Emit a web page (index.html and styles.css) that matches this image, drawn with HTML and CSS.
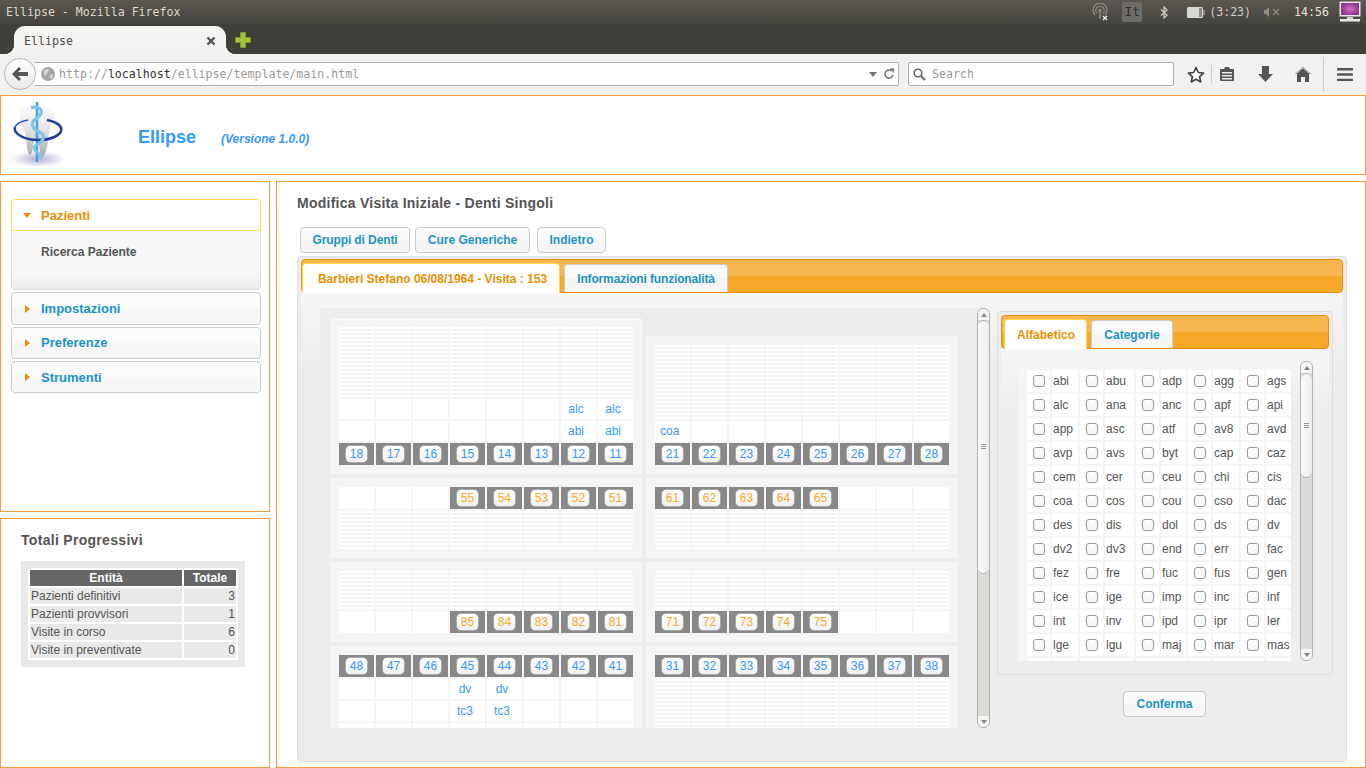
FILE: index.html
```html
<!DOCTYPE html>
<html lang="it">

<head>
    <meta charset="UTF-8">
    <meta name="viewport" content="width=device-width, initial-scale=1.0">
    <title>Ellipse</title>
    <link rel="stylesheet" href="styles.css">
</head>

<body>
    <!-- desktop panel -->
    <div class="titlebar">
        <span class="win-title">Ellipse - Mozilla Firefox</span>
        <div class="indicators">
            <svg class="ind-net" width="16" height="18" viewBox="0 0 16 18"><g fill="none" stroke="#8b8a84" stroke-width="1.3"><path d="M3 12a7 7 0 1 1 10 0"/><path d="M5 10.5a4.2 4.2 0 1 1 6 0"/></g><circle cx="8" cy="7.5" r="1.7" fill="#8b8a84"/><rect x="7.2" y="9" width="1.6" height="7" fill="#8b8a84"/><path d="M11 13l4 4M15 13l-4 4" stroke="#eee" stroke-width="1.4"/></svg>
            <span class="ind-lang">It</span>
            <svg class="ind-bt" width="8" height="13" viewBox="0 0 8 13"><path d="M1 3.5l6 5.5-3 3V1l3 3-6 5.5" fill="none" stroke="#c9c8c3" stroke-width="1.3"/></svg>
            <svg class="ind-batt" width="18" height="11" viewBox="0 0 18 11"><rect width="16" height="11" rx="1.5" fill="#d8d7d3"/><rect x="12" y="1" width="3" height="9" fill="#8e8d88"/><rect x="16" y="3" width="2" height="5" fill="#8e8d88"/></svg>
            <span class="ind-text ind-time-left">(3:23)</span>
            <svg class="ind-vol" width="16" height="10" viewBox="0 0 16 10"><path d="M0 3h2l3-3v10L2 7H0z" fill="#8f8e89"/><path d="M9 2l6 6M15 2l-6 6" stroke="#8f8e89" stroke-width="1.2"/></svg>
            <span class="ind-text ind-clock">14:56</span>
            <svg class="ind-mon" width="22" height="22" viewBox="0 0 22 22"><defs><radialGradient id="screen"><stop offset="0" stop-color="#d070c4"/><stop offset="1" stop-color="#8e3a8e"/></radialGradient></defs><rect x="0.5" y="0.5" width="21" height="15" fill="#e8e8e6"/><rect x="2" y="2" width="18" height="12" fill="url(#screen)"/><rect x="8" y="16" width="6" height="2" fill="#d0d0ce"/><rect x="1" y="18" width="20" height="2.5" fill="#e8e8e6"/></svg>
        </div>
    </div>

    <!-- browser chrome -->
    <div class="tabbar">
        <div class="tab">
            <span>Ellipse</span>
            <svg width="10" height="10" viewBox="0 0 10 10"><path d="M1.5 1.5l7 7M8.5 1.5l-7 7" stroke="#555" stroke-width="2.4"/></svg>
        </div>
        <svg class="new-tab" width="16" height="16" viewBox="0 0 16 16"><path d="M5.5 .5h5v5h5v5h-5v5h-5v-5h-5v-5h5z" fill="#a4c639" stroke="#7d9a2a"/></svg>
    </div>
    <div class="navbar">
        <div class="back-btn">
            <svg width="16" height="14" viewBox="0 0 16 14"><path d="M7 0l2 2-3 3h10v4H6l3 3-2 2-7-7z" fill="#555"/></svg>
        </div>
        <div class="urlbar">
            <svg class="globe" width="14" height="14" viewBox="0 0 14 14"><circle cx="7" cy="7" r="7" fill="#a5a5a5"/><path d="M3 3l4-1 1 2-2 2-1 3-2-2zM9 8l3-1-1 4-2 1z" fill="#d8d8d8"/></svg>
            <span class="url"><span class="url-dim">http://</span>localhost<span class="url-dim">/ellipse/template/main.html</span></span>
            <svg class="url-drop" width="8" height="5" viewBox="0 0 8 5"><path d="M0 0h8L4 5z" fill="#777"/></svg>
            <svg class="url-reload" width="12" height="12" viewBox="0 0 12 12"><path d="M10 6.5A4 4 0 1 1 8.6 3" fill="none" stroke="#777" stroke-width="1.6"/><path d="M7 0l4.500 .5L10.500 5z" fill="#777"/></svg>
        </div>
        <div class="searchbar">
            <svg width="13" height="13" viewBox="0 0 13 13"><circle cx="5" cy="5" r="3.800" fill="none" stroke="#666" stroke-width="1.600"/><path d="M8 8l4 4" stroke="#666" stroke-width="2"/></svg>
            <span>Search</span>
        </div>
        <svg class="nav-star" width="18" height="17" viewBox="0 0 18 17"><path d="M9 1.500l2.300 5 5.200 .6-3.900 3.500 1.100 5.300L9 13.200l-4.700 2.700 1.100-5.300L1.500 7.100l5.200-.6z" fill="#fff" stroke="#444" stroke-width="1.700" stroke-linejoin="round"/></svg>
        <span class="nav-sep nav-sep-short"></span>
        <svg class="nav-list" width="14" height="16" viewBox="0 0 14 16"><path d="M1 3h3l1-2h4l1 2h3a1 1 0 0 1 1 1v10a1 1 0 0 1-1 1H1a1 1 0 0 1-1-1V4a1 1 0 0 1 1-1z" fill="#555"/><path d="M2 6h10v1.500H2zM2 9h10v1.500H2zM2 12h10v1.500H2z" fill="#eee"/></svg>
        <svg class="nav-down" width="15" height="16" viewBox="0 0 15 16"><path d="M4 0h7v8h4l-7.500 8L0 8h4z" fill="#555"/></svg>
        <svg class="nav-home" width="16" height="15" viewBox="0 0 16 15"><path d="M8 0l8 7h-2v8H10v-5H6v5H2V7H0z" fill="#555"/><path d="M1.500 6.500L8 1l6.500 5.500" fill="none" stroke="#f2f1f0" stroke-width=".8"/></svg>
        <span class="nav-sep nav-sep-tall"></span>
        <svg class="nav-menu" width="16" height="13" viewBox="0 0 16 13"><path d="M0 1a1 1 0 0 1 1-1h14a1 1 0 0 1 0 2.400H1A1 1 0 0 1 0 1zM0 6.500a1 1 0 0 1 1-1.200h14a1 1 0 0 1 0 2.400H1A1 1 0 0 1 0 6.500zM0 12a1 1 0 0 1 1-1.200h14a1 1 0 0 1 0 2.400H1A1 1 0 0 1 0 12z" fill="#555"/></svg>
    </div>

    <!-- page -->
    <header class="box site-header">
        <svg class="logo" width="60" height="68" viewBox="0 0 60 68">
            <defs>
                <radialGradient id="shadow"><stop offset="0" stop-color="#aeaed2"/><stop offset="1" stop-color="#fff"/></radialGradient>
                <linearGradient id="tooth" x1="0" y1="0" x2="0" y2="1"><stop offset="0" stop-color="#fbfbfb"/><stop offset=".45" stop-color="#e4e4e4"/><stop offset="1" stop-color="#a9a9a9"/></linearGradient>
            </defs>
            <ellipse cx="28" cy="59" rx="28" ry="8" fill="url(#shadow)"/>
            <path d="M10 16c0-7 5-10 11-9 3 .5 5 1.500 8 .5 5-2 13-2 15 5 1 7-3 12-5 20-1 8-2 22-7 25-3-3-2-17-6-18-4 0-2 14-6 16-4-4-3-15-5-23-2-6-5-9-5-16z" fill="url(#tooth)"/>
            <path d="M27 2v60" stroke="#4f9fd6" stroke-width="2.500"/>
            <path d="M5 27c-2 6 8 13 23 13s25-6 23-12c-1-4-8-7-14-8" fill="none" stroke="#1f3f9e" stroke-width="2.600"/>
            <path d="M5 27c2-4 7-6 13-7" fill="none" stroke="#2a52b8" stroke-width="1.600"/>
            <path d="M21 8c7-3 13 2 9 7s-10 6-7 12 13 5 10 12-11 5-8 11 7 3 5 9" fill="none" stroke="#7cc4ee" stroke-width="3.200"/>
        </svg>
        <h1 class="app-name">Ellipse</h1>
        <span class="app-version">(Versione 1.0.0)</span>
    </header>

    <div class="columns">
        <aside class="sidebar">
            <nav class="box menu-box">
                <div class="accordion">
                    <div class="acc-head acc-head-open"><span class="arrow-down"></span>Pazienti</div>
                    <div class="acc-body"><a>Ricerca Paziente</a></div>
                    <div class="acc-head acc-head-tall"><span class="arrow-right"></span>Impostazioni</div>
                    <div class="acc-head"><span class="arrow-right"></span>Preferenze</div>
                    <div class="acc-head"><span class="arrow-right"></span>Strumenti</div>
                </div>
            </nav>
            <section class="box totals-box">
                <h2>Totali Progressivi</h2>
                <div class="totals-wrap">
                    <table class="totals">
                        <tr><th>Entità</th><th>Totale</th></tr>
                        <tr><td>Pazienti definitivi</td><td class="num">3</td></tr>
                        <tr><td>Pazienti provvisori</td><td class="num">1</td></tr>
                        <tr><td>Visite in corso</td><td class="num">6</td></tr>
                        <tr><td>Visite in preventivate</td><td class="num">0</td></tr>
                    </table>
                </div>
            </section>
        </aside>

        <main class="box main-box">
            <h2 class="page-title">Modifica Visita Iniziale - Denti Singoli</h2>
            <div class="actions">
                <button class="btn btn-first">Gruppi di Denti</button>
                <button class="btn btn-second">Cure Generiche</button>
                <button class="btn btn-third">Indietro</button>
            </div>

            <div class="widget">
                <div class="tabs-head">
                    <span class="tab-item tab-active tab-visit">Barbieri Stefano 06/08/1964 - Visita : 153</span>
                    <span class="tab-item tab-info">Informazioni funzionalità</span>
                </div>
                <div class="widget-body">
                    <div class="chart-area">
                        <div class="quads">
                            <div class="quad quad-tall">
                                <div class="teeth">
                                    <i class="lines h70"></i><i class="lines h70"></i><i class="lines h70"></i><i class="lines h70"></i><i class="lines h70"></i><i class="lines h70"></i><i class="lines h70"></i><i class="lines h70"></i>
                                    <b></b><b></b><b></b><b></b><b></b><b></b><b>alc</b><b>alc</b>
                                    <b></b><b></b><b></b><b></b><b></b><b></b><b>abi</b><b>abi</b>
                                    <u><span>18</span></u><u><span>17</span></u><u><span>16</span></u><u><span>15</span></u><u><span>14</span></u><u><span>13</span></u><u><span>12</span></u><u><span>11</span></u>
                                </div>
                            </div>
                            <div class="quad quad-low">
                                <div class="teeth">
                                    <i class="lines h74"></i><i class="lines h74"></i><i class="lines h74"></i><i class="lines h74"></i><i class="lines h74"></i><i class="lines h74"></i><i class="lines h74"></i><i class="lines h74"></i>
                                    <b class="left">coa</b><b></b><b></b><b></b><b></b><b></b><b></b><b></b>
                                    <u><span>21</span></u><u><span>22</span></u><u><span>23</span></u><u><span>24</span></u><u><span>25</span></u><u><span>26</span></u><u><span>27</span></u><u><span>28</span></u>
                                </div>
                            </div>
                            <div class="quad">
                                <div class="teeth milk">
                                    <b class="tall"></b><b class="tall"></b><b class="tall"></b><u><span>55</span></u><u><span>54</span></u><u><span>53</span></u><u><span>52</span></u><u><span>51</span></u>
                                    <i class="lines h38"></i><i class="lines h38"></i><i class="lines h38"></i><i class="lines h38"></i><i class="lines h38"></i><i class="lines h38"></i><i class="lines h38"></i><i class="lines h38"></i>
                                </div>
                            </div>
                            <div class="quad">
                                <div class="teeth milk">
                                    <u><span>61</span></u><u><span>62</span></u><u><span>63</span></u><u><span>64</span></u><u><span>65</span></u><b class="tall"></b><b class="tall"></b><b class="tall"></b>
                                    <i class="lines h38"></i><i class="lines h38"></i><i class="lines h38"></i><i class="lines h38"></i><i class="lines h38"></i><i class="lines h38"></i><i class="lines h38"></i><i class="lines h38"></i>
                                </div>
                            </div>
                            <div class="quad">
                                <div class="teeth milk">
                                    <i class="lines h38"></i><i class="lines h38"></i><i class="lines h38"></i><i class="lines h38"></i><i class="lines h38"></i><i class="lines h38"></i><i class="lines h38"></i><i class="lines h38"></i>
                                    <b class="tall"></b><b class="tall"></b><b class="tall"></b><u><span>85</span></u><u><span>84</span></u><u><span>83</span></u><u><span>82</span></u><u><span>81</span></u>
                                </div>
                            </div>
                            <div class="quad">
                                <div class="teeth milk">
                                    <i class="lines h38"></i><i class="lines h38"></i><i class="lines h38"></i><i class="lines h38"></i><i class="lines h38"></i><i class="lines h38"></i><i class="lines h38"></i><i class="lines h38"></i>
                                    <u><span>71</span></u><u><span>72</span></u><u><span>73</span></u><u><span>74</span></u><u><span>75</span></u><b class="tall"></b><b class="tall"></b><b class="tall"></b>
                                </div>
                            </div>
                            <div class="quad">
                                <div class="teeth">
                                    <u><span>48</span></u><u><span>47</span></u><u><span>46</span></u><u><span>45</span></u><u><span>44</span></u><u><span>43</span></u><u><span>42</span></u><u><span>41</span></u>
                                    <b></b><b></b><b></b><b>dv</b><b>dv</b><b></b><b></b><b></b>
                                    <b></b><b></b><b></b><b>tc3</b><b>tc3</b><b></b><b></b><b></b>
                                    <b></b><b></b><b></b><b></b><b></b><b></b><b></b><b></b>
                                </div>
                            </div>
                            <div class="quad">
                                <div class="teeth">
                                    <u><span>31</span></u><u><span>32</span></u><u><span>33</span></u><u><span>34</span></u><u><span>35</span></u><u><span>36</span></u><u><span>37</span></u><u><span>38</span></u>
                                    <i class="lines h74"></i><i class="lines h74"></i><i class="lines h74"></i><i class="lines h74"></i><i class="lines h74"></i><i class="lines h74"></i><i class="lines h74"></i><i class="lines h74"></i>
                                </div>
                            </div>
                        </div>
                    </div>

                    <div class="scrollbar scroll-main">
                        <span class="sb-btn sb-up"></span>
                        <span class="sb-thumb"><em></em></span>
                        <span class="sb-track"></span>
                        <span class="sb-btn sb-down"></span>
                    </div>

                    <div class="side-col">
                        <div class="cure-panel">
                            <div class="tabs-head tabs-small">
                                <span class="tab-item tab-active tab-alfa">Alfabetico</span>
                                <span class="tab-item tab-cat">Categorie</span>
                            </div>
                            <div class="cure-body">
                                <div class="cure-list">
                                    <div class="cures">
                                        <s><input type="checkbox"></s><label>abi</label><s><input type="checkbox"></s><label>abu</label><s><input type="checkbox"></s><label>adp</label><s><input type="checkbox"></s><label>agg</label><s><input type="checkbox"></s><label>ags</label>
                                        <s><input type="checkbox"></s><label>alc</label><s><input type="checkbox"></s><label>ana</label><s><input type="checkbox"></s><label>anc</label><s><input type="checkbox"></s><label>apf</label><s><input type="checkbox"></s><label>api</label>
                                        <s><input type="checkbox"></s><label>app</label><s><input type="checkbox"></s><label>asc</label><s><input type="checkbox"></s><label>atf</label><s><input type="checkbox"></s><label>av8</label><s><input type="checkbox"></s><label>avd</label>
                                        <s><input type="checkbox"></s><label>avp</label><s><input type="checkbox"></s><label>avs</label><s><input type="checkbox"></s><label>byt</label><s><input type="checkbox"></s><label>cap</label><s><input type="checkbox"></s><label>caz</label>
                                        <s><input type="checkbox"></s><label>cem</label><s><input type="checkbox"></s><label>cer</label><s><input type="checkbox"></s><label>ceu</label><s><input type="checkbox"></s><label>chi</label><s><input type="checkbox"></s><label>cis</label>
                                        <s><input type="checkbox"></s><label>coa</label><s><input type="checkbox"></s><label>cos</label><s><input type="checkbox"></s><label>cou</label><s><input type="checkbox"></s><label>cso</label><s><input type="checkbox"></s><label>dac</label>
                                        <s><input type="checkbox"></s><label>des</label><s><input type="checkbox"></s><label>dis</label><s><input type="checkbox"></s><label>dol</label><s><input type="checkbox"></s><label>ds</label><s><input type="checkbox"></s><label>dv</label>
                                        <s><input type="checkbox"></s><label>dv2</label><s><input type="checkbox"></s><label>dv3</label><s><input type="checkbox"></s><label>end</label><s><input type="checkbox"></s><label>err</label><s><input type="checkbox"></s><label>fac</label>
                                        <s><input type="checkbox"></s><label>fez</label><s><input type="checkbox"></s><label>fre</label><s><input type="checkbox"></s><label>fuc</label><s><input type="checkbox"></s><label>fus</label><s><input type="checkbox"></s><label>gen</label>
                                        <s><input type="checkbox"></s><label>ice</label><s><input type="checkbox"></s><label>ige</label><s><input type="checkbox"></s><label>imp</label><s><input type="checkbox"></s><label>inc</label><s><input type="checkbox"></s><label>inf</label>
                                        <s><input type="checkbox"></s><label>int</label><s><input type="checkbox"></s><label>inv</label><s><input type="checkbox"></s><label>ipd</label><s><input type="checkbox"></s><label>ipr</label><s><input type="checkbox"></s><label>ler</label>
                                        <s><input type="checkbox"></s><label>lge</label><s><input type="checkbox"></s><label>lgu</label><s><input type="checkbox"></s><label>maj</label><s><input type="checkbox"></s><label>mar</label><s><input type="checkbox"></s><label>mas</label>
                                        <s></s><label></label><s></s><label></label><s></s><label></label><s></s><label></label><s></s><label></label>
                                    </div>
                                </div>
                                <div class="scrollbar scroll-cure">
                                    <span class="sb-btn sb-up"></span>
                                    <span class="sb-thumb"><em></em></span>
                                    <span class="sb-track"></span>
                                    <span class="sb-btn sb-down"></span>
                                </div>
                            </div>
                        </div>
                        <button class="btn btn-confirm">Conferma</button>
                    </div>
                </div>
            </div>
        </main>
    </div>
</body>

</html>
```

FILE: styles.css
```css
* {
    box-sizing: border-box;
}

html,
body {
    margin: 0;
    width: 1366px;
    height: 768px;
    overflow: hidden;
}

body {
    font-family: 'Liberation Sans', Arial, sans-serif;
    font-size: 12px;
    color: #555;
    background: #fff;
}

/* desktop panel */
.titlebar {
    height: 24px;
    display: flex;
    align-items: center;
    justify-content: space-between;
    background: linear-gradient(#5a5850, #45443e);
    font-family: 'DejaVu Sans Mono', monospace;
    font-size: 11.6px;
    color: #dcd6c8;
}

.win-title {
    margin-left: 6px;
}

.indicators {
    display: flex;
    align-items: center;
}

.ind-net {
    margin-right: 14px;
}

.ind-lang {
    width: 20px;
    height: 20px;
    line-height: 20px;
    text-align: center;
    background: #6d6c68;
    border-radius: 2px;
    color: #2f2f2d;
    margin-right: 18px;
    font-size: 13px;
}

.ind-bt {
    margin-right: 19px;
}

.ind-batt {
    margin-right: 4px;
}

.ind-text {
    color: #cfcdc6;
}

.ind-time-left {
    margin-right: 13px;
}

.ind-vol {
    margin-right: 14px;
}

.ind-clock {
    color: #e4e2dc;
    margin-right: 10px;
}

.ind-mon {
    margin-right: 5px;
}

/* browser tabs and toolbar */
.tabbar {
    height: 30px;
    display: flex;
    align-items: flex-end;
    background: #403f39;
}

.tab {
    width: 212px;
    height: 28px;
    margin-left: 14px;
    padding: 2px 10px 0 10px;
    display: flex;
    align-items: center;
    justify-content: space-between;
    position: relative;
    background: linear-gradient(#f5f4f2, #f2f1f0);
    border-radius: 11px 11px 0 0;
    font-family: 'DejaVu Sans Mono', monospace;
    font-size: 11.6px;
    color: #4c4c4c;
}

.tab::before,
.tab::after {
    content: "";
    position: absolute;
    bottom: 0;
    width: 10px;
    height: 10px;
}

.tab::before {
    left: -10px;
    background: radial-gradient(circle at 0 0, transparent 10px, #f2f1f0 10.5px);
}

.tab::after {
    right: -10px;
    background: radial-gradient(circle at 100% 0, transparent 10px, #f2f1f0 10.5px);
}

.new-tab {
    margin: 0 0 6px 9px;
}

.navbar {
    height: 41px;
    padding-bottom: 1px;
    display: flex;
    align-items: center;
    background: #f2f1f0;
}

.back-btn {
    width: 32px;
    height: 32px;
    margin-left: 4px;
    border: 1px solid #b5b5b8;
    border-radius: 50%;
    background: linear-gradient(#fff, #e9e9e9);
    display: flex;
    align-items: center;
    justify-content: center;
    position: relative;
    z-index: 1;
}

.urlbar {
    width: 864px;
    height: 24px;
    margin-left: -1px;
    display: flex;
    align-items: center;
    background: #fff;
    border: 1px solid #b0b0b0;
    border-left: 0;
    border-radius: 0 2px 2px 0;
    font-family: 'DejaVu Sans Mono', monospace;
    font-size: 11.6px;
    color: #333;
}

.globe {
    margin-left: 6px;
    flex: none;
}

.url {
    margin-left: 4px;
    flex: 1;
}

.url-dim {
    color: #999;
}

.url-drop {
    margin-right: 6px;
}

.url-reload {
    margin-right: 3px;
}

.searchbar {
    width: 266px;
    height: 24px;
    margin-left: 9px;
    padding-left: 4px;
    display: flex;
    align-items: center;
    gap: 6px;
    background: #fff;
    border: 1px solid #b0b0b0;
    border-radius: 2px;
    font-family: 'DejaVu Sans Mono', monospace;
    font-size: 11.6px;
    color: #999;
}

.nav-star {
    margin-left: 13px;
}

.nav-sep {
    width: 1px;
    background: #cfcecd;
}

.nav-sep-short {
    height: 18px;
    margin-left: 6px;
}

.nav-sep-tall {
    height: 34px;
    margin-left: 12px;
}

.nav-list {
    margin-left: 8px;
}

.nav-down {
    margin-left: 24px;
}

.nav-home {
    margin-left: 22px;
}

.nav-menu {
    margin-left: 13px;
}

/* page boxes */
.box {
    border: 1px solid #f79a3c;
    background: #fff;
}

.site-header {
    height: 80px;
    display: flex;
    align-items: flex-start;
}

.logo {
    margin: 4px 0 0 9px;
    flex: none;
}

.app-name {
    margin: 31px 0 0 68px;
    font-size: 18px;
    line-height: 20px;
    font-weight: bold;
    color: #3399ff;
}

.app-version {
    margin: 36px 0 0 25px;
    font-size: 12px;
    line-height: 15px;
    font-weight: bold;
    font-style: italic;
    color: #3399ff;
}

.columns {
    display: flex;
    gap: 6px;
    margin-top: 6px;
}

.sidebar {
    width: 270px;
    display: flex;
    flex-direction: column;
    gap: 6px;
}

.menu-box {
    height: 331px;
    padding: 17px 8px 0 10px;
}

.acc-head {
    height: 32px;
    margin-top: 2px;
    padding-left: 10px;
    display: flex;
    align-items: center;
    font-size: 13px;
    font-weight: bold;
    color: #1c94c4;
    background: linear-gradient(#fbfbfb 50%, #f6f6f6 50%);
    border: 1px solid #ccc;
    border-radius: 4px;
}

.acc-head-tall {
    height: 33px;
}

.acc-head-tall + .acc-head {
    padding-bottom: 1px;
}

.acc-head-open {
    margin-top: 0;
    color: #eb8f00;
    background: #fff;
    border-color: #fbd850;
    border-radius: 4px 4px 0 0;
}

.acc-body {
    height: 59px;
    padding: 14px 0 0 29px;
    background: linear-gradient(#f7f7f7 70%, #ececec);
    border: 1px solid #ddd;
    border-top: 0;
    border-radius: 0 0 4px 4px;
    font-weight: bold;
    color: #555;
}

.arrow-down,
.arrow-right {
    width: 19px;
    flex: none;
}

.arrow-down::before {
    content: "";
    display: block;
    width: 0;
    margin-left: 1px;
    border: 4px solid transparent;
    border-top: 5px solid #ef8c08;
    border-bottom: 0;
}

.arrow-right::before {
    content: "";
    display: block;
    width: 0;
    margin-left: 3px;
    border: 4px solid transparent;
    border-left: 5px solid #ef8c08;
    border-right: 0;
}

.totals-box {
    height: 250px;
    padding: 12px 24px 0 20px;
}

.totals-box h2 {
    margin: 0 0 12px;
    font-size: 14px;
    line-height: 18px;
    letter-spacing: .3px;
    color: #555;
}

.totals-wrap {
    padding: 7px;
    background: #e9e9e9;
}

.totals {
    width: 210px;
    background: #fff;
    border-spacing: 2px;
    table-layout: fixed;
}

.totals th {
    padding: 0;
    height: 16px;
    background: #666;
    color: #fff;
    font-size: 12px;
}

.totals th:last-child {
    width: 52px;
}

.totals td {
    height: 16px;
    padding: 0 1px;
    background: #e9e9e9;
    color: #555;
    line-height: 14px;
}

.totals .num {
    text-align: right;
}

/* main area */
.main-box {
    width: 1090px;
    height: 587px;
    padding: 0 18px 0 20px;
}

.page-title {
    margin: 0;
    padding-top: 12px;
    font-size: 14px;
    line-height: 18px;
    letter-spacing: .25px;
    color: #555;
}

.actions {
    display: flex;
    margin: 15px 0 3px 3px;
}

.btn {
    height: 26px;
    padding: 0;
    font-family: inherit;
    font-size: 12px;
    font-weight: bold;
    color: #1c94c4;
    background: linear-gradient(#fafafa 50%, #f5f5f5 50%);
    border: 1px solid #ccc;
    border-radius: 4px;
}

.btn-first {
    width: 110px;
    letter-spacing: -.1px;
}

.btn-second {
    width: 115px;
    margin-left: 5px;
}

.btn-third {
    width: 69px;
    margin-left: 7px;
}

.btn-confirm {
    width: 83px;
    margin: 16px 0 0 -1px;
}

.widget {
    height: 506px;
    padding: 2px 3px 3px;
    background: #ededed;
    border: 1px solid #ddd;
    border-radius: 4px;
}

.tabs-head {
    height: 34px;
    padding-top: 4px;
    display: flex;
    align-items: flex-end;
    background: linear-gradient(#f8b650 50%, #f6a828 50%);
    border: 1px solid #e78f08;
    border-radius: 4px;
}

.tabs-small {
    padding-left: 2px;
}

.tab-item {
    height: 29px;
    display: flex;
    align-items: center;
    justify-content: center;
    margin-bottom: -1px;
    font-weight: bold;
    color: #1c94c4;
    background: linear-gradient(#fafafa 50%, #f5f5f5 50%);
    border: 1px solid #ccc;
    border-bottom: 0;
    border-radius: 4px 4px 0 0;
}

.tab-active {
    height: 30px;
    color: #eb8f00;
    background: #fff;
    border-color: #fbd850;
}

.tab-visit {
    width: 258px;
    padding-left: 3px;
}

.tab-info {
    width: 164px;
    height: 28px;
    margin: 0 0 0 4px;
    letter-spacing: -.15px;
}

.tab-alfa {
    width: 83px;
    padding-left: 1px;
}

.tab-cat {
    width: 82px;
    height: 28px;
    margin: 0 0 0 4px;
}

.widget-body {
    height: 464px;
    padding: 15px 0 0 19px;
    display: flex;
    align-items: flex-start;
    background: linear-gradient(#f6f6f6, #ededed 70px);
}

.chart-area {
    width: 657px;
    height: 420px;
    padding: 10px 0 0 10px;
    overflow: hidden;
    background: #ececec;
}

.quads {
    display: grid;
    grid-template-columns: 312px 312px;
    gap: 4px;
}

.quad {
    padding: 9px;
    background: #f5f5f5;
}

.quad-low {
    align-self: end;
}

.teeth {
    display: grid;
    grid-template-columns: repeat(8, 35px);
    gap: 2px;
}

.teeth b {
    height: 20px;
    padding-right: 5px;
    line-height: 20px;
    text-align: center;
    font-weight: normal;
    color: #3399ff;
    background: #fff;
}

.teeth b.left {
    text-align: left;
    padding: 0 0 0 5px;
}

.teeth b.tall {
    height: 22px;
}

.teeth u {
    height: 22px;
    display: flex;
    align-items: center;
    justify-content: center;
    text-decoration: none;
    background: #888;
}

.teeth u span {
    width: 23px;
    height: 18px;
    line-height: 16px;
    text-align: center;
    color: #3399ff;
    background: linear-gradient(#fff, #f1f1f1);
    border: 1px solid #aaa;
    border-radius: 5px;
}

.milk u span {
    color: #ffa726;
}

.lines {
    display: block;
    background: repeating-linear-gradient(#fff 0, #fff 2px, transparent 2px, transparent 4px);
}

.h70 {
    height: 70px;
}

.h74 {
    height: 74px;
}

.h38 {
    height: 38px;
}

/* fake scrollbars */
.scrollbar {
    display: flex;
    flex-direction: column;
    flex: none;
    width: 13px;
    background: #dddbd9;
    border: 1px solid #b5b3ae;
    border-radius: 6px;
    overflow: hidden;
}

.scroll-main {
    height: 420px;
}

.scroll-cure {
    height: 300px;
    margin-left: 9px;
}

.sb-btn {
    height: 11px;
    flex: none;
    display: flex;
    align-items: center;
    justify-content: center;
    background: #f5f4f3;
}

.sb-up::before {
    content: "";
    border: 3px solid transparent;
    border-bottom: 4px solid #888;
    border-top: 0;
}

.sb-down::before {
    content: "";
    border: 3px solid transparent;
    border-top: 4px solid #888;
    border-bottom: 0;
}

.sb-thumb {
    flex: none;
    display: flex;
    align-items: center;
    justify-content: center;
    background: linear-gradient(90deg, #fafafa, #eeeded);
    border: 1px solid #b5b3ae;
    border-width: 1px 0;
    border-radius: 6px;
}

.sb-thumb em {
    width: 5px;
    height: 6px;
    background: repeating-linear-gradient(#999 0, #999 1px, transparent 1px, transparent 2px);
}

.scroll-main .sb-thumb {
    height: 254px;
}

.scroll-cure .sb-thumb {
    height: 105px;
}

.sb-track {
    flex: 1;
}

/* right column */
.side-col {
    width: 336px;
    margin-left: 7px;
    padding-top: 3px;
    display: flex;
    flex-direction: column;
    align-items: center;
}

.cure-panel {
    width: 336px;
    height: 364px;
    padding: 3px;
    background: #ededed;
    border: 1px solid #ddd;
    border-radius: 4px;
}

.cure-body {
    height: 323px;
    padding: 12px 0 0 17px;
    display: flex;
    align-items: flex-start;
    background: linear-gradient(#f6f6f6, #ededed 60px);
}

.cure-list {
    width: 273px;
    height: 300px;
    padding: 9px 0 0 9px;
    overflow: hidden;
    background: #f5f5f5;
}

.cures {
    display: grid;
    grid-template-columns: 23px 26px 23px 29px 23px 25px 23px 26px 23px 25px;
    grid-auto-rows: 22px;
    gap: 2px;
}

.cures s {
    display: flex;
    align-items: center;
    justify-content: center;
    background: #fff;
}

.cures label {
    padding-left: 1px;
    line-height: 22px;
    color: #555;
    background: #fff;
}

.cures input {
    appearance: none;
    width: 12px;
    height: 12px;
    margin: 0;
    background: linear-gradient(#fff, #f4f4f4);
    border: 1px solid #999;
    border-radius: 3px;
}
```
